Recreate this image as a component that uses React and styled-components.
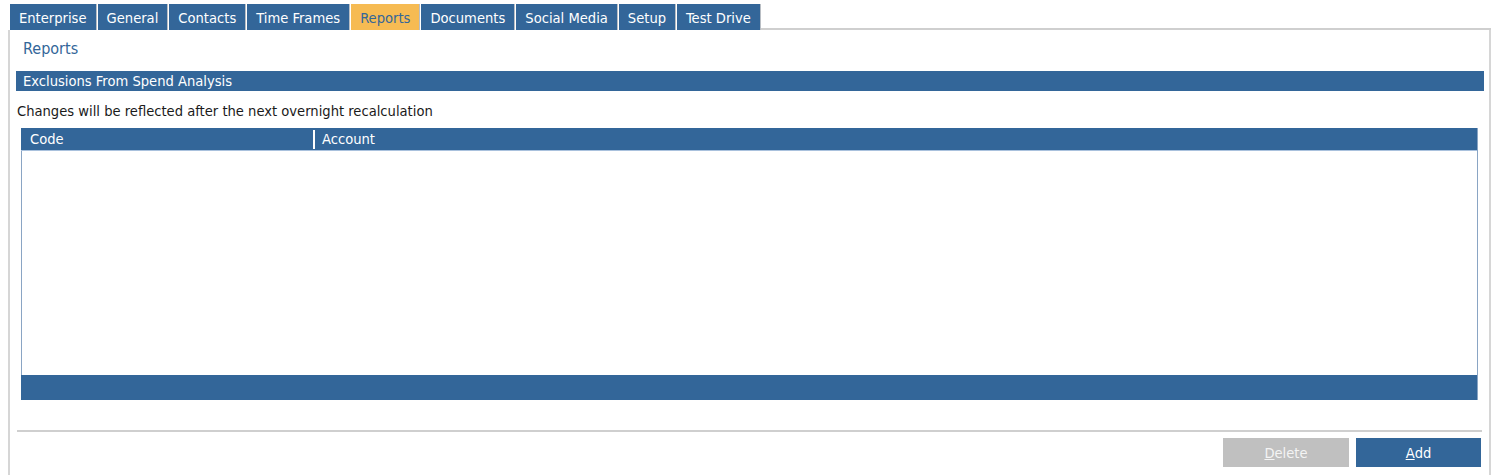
import React from 'react';
import styled, { createGlobalStyle } from 'styled-components';

const GlobalStyle = createGlobalStyle`
	body {
		margin: 0;
		background: #ffffff;
		font-family: "DejaVu Sans Condensed", "Liberation Sans", sans-serif;
		font-size: 14.6px;
		color: #1a1a1a;
	}
`

const Page = styled.div`
	padding: 4px 5px 0 8px;
`

const TabBar = styled.div`
	display: flex;
	align-items: stretch;
	height: 26px;
	padding-left: 2px;
`

const Tab = styled.div`
	display: flex;
	align-items: center;
	padding: 0 9px 0 9px;
	margin-right: 2px;
	background: ${p => (p.$active ? '#f6bb53' : '#336699')};
	color: ${p => (p.$active ? '#336699' : '#ffffff')};
	font-size: 14.6px;
	box-shadow: 1px 0 0 #b9bec4;
`

const TabFiller = styled.div`
	flex: 1;
	border-bottom: 2px solid #cfcfcf;
	margin-left: -1px;
`

const Panel = styled.div`
	border-left: 2px solid #d6d6d6;
	border-right: 2px solid #d6d6d6;
	padding: 8px 5px 8px 6px;
	height: 440px;
`

const Title = styled.div`
	color: #336699;
	font-size: 16px;
	padding-left: 7px;
	height: 20px;
	line-height: 20px;
	padding-top: 1px;
	margin-bottom: 12px;
`

const SectionBar = styled.div`
	background: #336699;
	color: #ffffff;
	height: 20px;
	line-height: 20px;
	padding-left: 7px;
`

const Note = styled.div`
	padding: 11px 0 0 1px;
	height: 26px;
	line-height: 17px;
`

const Grid = styled.div`
	margin: 0 6px 0 5px;
	display: flex;
	flex-direction: column;
	height: 272px;
	border-right: 1px solid #8aa5c4;
`

const GridHeader = styled.div`
	display: grid;
	grid-template-columns: 292px 1fr;
	background: #336699;
	color: #ffffff;
	height: 22px;
	border-bottom: 1px solid #a9c1dd;
`

const HeaderCell = styled.div`
	display: flex;
	align-items: center;
	padding-left: ${p => (p.$first ? '9px' : '7px')};
	padding-bottom: 2px;
	border-left: ${p => (p.$first ? 'none' : '2px solid #ffffff')};
	margin: 2px 0;
`

const GridBody = styled.div`
	flex: 1;
	background: #ffffff;
	border-left: 1px solid #8aa5c4;
`

const GridFooter = styled.div`
	height: 25px;
	background: #336699;
`

const Divider = styled.div`
	margin: 30px 2px 0 1px;
	border-top: 2px solid #cfcfcf;
`

const ButtonRow = styled.div`
	display: flex;
	justify-content: flex-end;
	gap: 7px;
	padding: 6px 3px 0 0;
`

const Button = styled.div`
	width: ${p => p.$w}px;
	height: 29px;
	display: flex;
	align-items: center;
	justify-content: center;
	background: ${p => (p.$disabled ? '#c0c0c0' : '#336699')};
	color: ${p => (p.$disabled ? '#f4f4f4' : '#ffffff')};
	u {
		text-decoration: underline;
	}
`

const tabs = ['Enterprise', 'General', 'Contacts', 'Time Frames', 'Reports', 'Documents', 'Social Media', 'Setup', 'Test Drive']

export default function App() {
	return (
		<Page>
			<GlobalStyle />
			<TabBar>
				{tabs.map(t => (
					<Tab key={t} $active={t === 'Reports'}>{t}</Tab>
				))}
				<TabFiller />
			</TabBar>
			<Panel>
				<Title>Reports</Title>
				<SectionBar>Exclusions From Spend Analysis</SectionBar>
				<Note>Changes will be reflected after the next overnight recalculation</Note>
				<Grid>
					<GridHeader>
						<HeaderCell $first>Code</HeaderCell>
						<HeaderCell>Account</HeaderCell>
					</GridHeader>
					<GridBody />
					<GridFooter />
				</Grid>
				<Divider />
				<ButtonRow>
					<Button $w={126} $disabled><u>D</u>elete</Button>
					<Button $w={125}><u>A</u>dd</Button>
				</ButtonRow>
			</Panel>
		</Page>
	)
}
